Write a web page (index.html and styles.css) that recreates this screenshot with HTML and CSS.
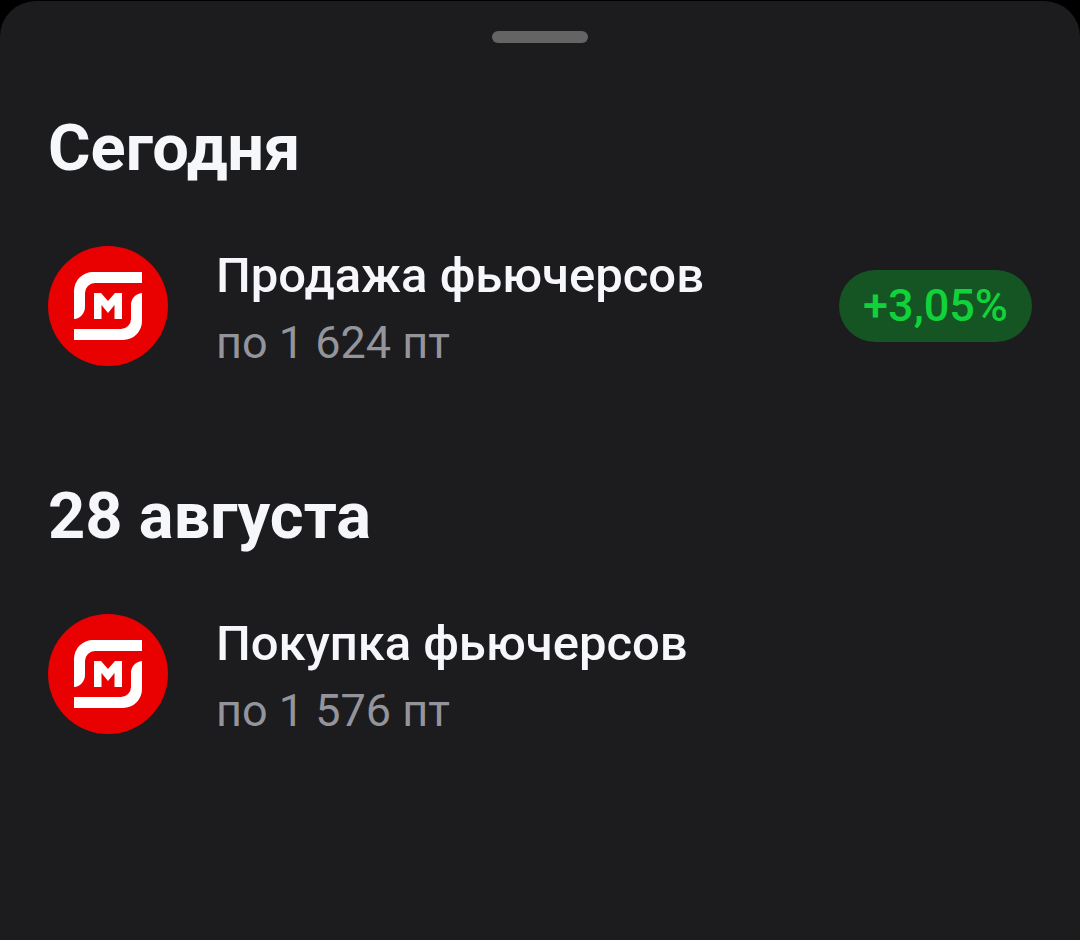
FILE: index.html
```html
<!DOCTYPE html>
<html lang="ru">
<head>
    <meta charset="UTF-8">
    <meta name="viewport" content="width=device-width, initial-scale=1.0">
    <title>Сделки</title>
    <link rel="stylesheet" href="styles.css">
</head>
<body>
    <svg class="sprite" aria-hidden="true">
        <symbol id="logo" viewBox="0 0 120 120">
            <circle cx="60" cy="60" r="60" fill="#e90000"/>
            <path fill="#fff" d="M94 26V37H47A10 10 0 0 0 37 47V61A12 12 0 0 1 26 73V45A19 19 0 0 1 45 26Z"/>
            <path fill="#fff" d="M26 94V83H73A10 10 0 0 0 83 73V59A12 12 0 0 1 94 47V75A19 19 0 0 1 75 94Z"/>
            <path fill="#fff" d="M46 73V47H53L60 55L67 47H74V73H66.500V59L60 67L53.500 59V73Z"/>
        </symbol>
    </svg>
    <main class="sheet">
        <div class="handle"></div>
        <section class="day">
            <h2 class="day-title">Сегодня</h2>
            <div class="deal">
                <svg class="logo" aria-hidden="true"><use href="#logo"/></svg>
                <div class="info">
                    <div class="name">Продажа фьючерсов</div>
                    <div class="price">по 1 624 пт</div>
                </div>
                <span class="badge">+3,05%</span>
            </div>
        </section>
        <section class="day">
            <h2 class="day-title">28 августа</h2>
            <div class="deal">
                <svg class="logo" aria-hidden="true"><use href="#logo"/></svg>
                <div class="info">
                    <div class="name">Покупка фьючерсов</div>
                    <div class="price">по 1 576 пт</div>
                </div>
            </div>
        </section>
    </main>
</body>
</html>
```
FILE: styles.css
```css
body {
    margin: 0;
    background-color: #000;
    font-family: Roboto, "Liberation Sans", sans-serif;
    color: #f6f7fb;
}
.sprite {
    display: none;
}
.sheet {
    box-sizing: border-box;
    min-height: 100vh;
    padding: 30px 48px 48px;
    border-top: 1px solid #000;
    background-color: #1c1c1e;
    border-radius: 36px 36px 0 0;
}
.handle {
    width: 96px;
    height: 12px;
    margin: 0 auto 65px;
    border-radius: 6px;
    background-color: #646464;
}
.day {
    margin-bottom: 110px;
}
.day-title {
    margin: 0 0 58px;
    font-size: 65px;
    line-height: 80px;
    font-weight: 700;
}
.deal {
    display: flex;
    align-items: center;
    gap: 48px;
}
.logo {
    flex: none;
    width: 120px;
    height: 120px;
}
.info {
    flex: 1;
    display: flex;
    flex-direction: column;
    gap: 14px;
}
.name {
    font-size: 49px;
    line-height: 60px;
    font-weight: 500;
}
.price {
    font-size: 45px;
    line-height: 46px;
    color: #94959c;
}
.badge {
    padding: 0 24px;
    border-radius: 36px;
    background-color: #145523;
    color: #12d23c;
    font-size: 45px;
    line-height: 72px;
    font-weight: 500;
}
```
